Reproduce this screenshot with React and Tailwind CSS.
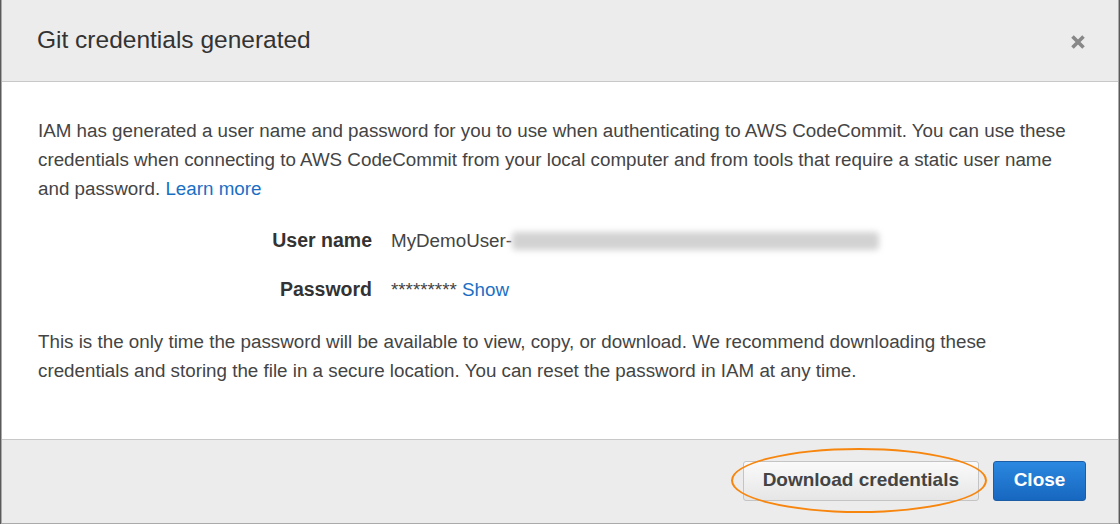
export default function App() {
  return (
    <div className="w-[1120px] h-[524px] bg-[#5a5a5a] pl-[1px] pr-[1px] font-['Liberation_Sans',Arial,sans-serif]">
      <div className="w-full h-full bg-white border-l border-r border-b border-[#aaa] flex flex-col">
        <div className="h-[82px] shrink-0 bg-[#ececec] border-b border-[#c8c8c8] flex items-center justify-between pl-[35px] pr-[32px]">
          <h1 className="text-[24.5px] text-[#333] leading-none pb-[1px]">Git credentials generated</h1>
          <svg width="16" height="16" viewBox="0 0 16 16" className="mt-[2px]">
            <path d="M2.5 2.5 L13.5 13.5 M13.5 2.5 L2.5 13.5" stroke="#888" strokeWidth="3.6" strokeLinecap="butt" />
          </svg>
        </div>
        <div className="flex-1 pt-[34px] pl-[36px] pr-[44px] text-[18.8px] leading-[29px] text-[#444]">
          <p>
            IAM has generated a user name and password for you to use when authenticating to AWS CodeCommit. You can use these credentials when connecting to AWS CodeCommit from your local computer and from tools that require a static user name and password.{" "}
            <a className="text-[#1a6fc4]">Learn more</a>
          </p>
          <div className="mt-[23px] flex flex-col gap-[20px]">
            <div className="flex items-center gap-[19px]">
              <div className="w-[334px] text-right font-bold text-[#333] text-[19.5px]">User name</div>
              <div className="flex items-center">
                <span>MyDemoUser-</span>
                <span className="relative inline-block w-[367px] h-[20px]">
                  <span className="absolute inset-x-0 inset-y-[1px] bg-[#d2d2d2] blur-[3px] rounded-sm"></span>
                </span>
              </div>
            </div>
            <div className="flex items-center gap-[19px]">
              <div className="w-[334px] text-right font-bold text-[#333] text-[19.5px]">Password</div>
              <div>
                <span>*********</span> <a className="text-[#1a6fc4]">Show</a>
              </div>
            </div>
          </div>
          <p className="mt-[23px] pr-[30px]">
            This is the only time the password will be available to view, copy, or download. We recommend downloading these credentials and storing the file in a secure location. You can reset the password in IAM at any time.
          </p>
        </div>
        <div className="h-[84px] shrink-0 bg-[#ececec] border-t border-[#c8c8c8] flex items-center justify-end gap-[14px] pr-[32px] pb-[2px]">
          <div className="relative">
            <button className="h-[40px] px-[19px] rounded-[3px] border border-[#c4c4c4] bg-gradient-to-b from-[#fafafa] to-[#e6e6e6] text-[19px] font-bold text-[#444]">
              Download credentials
            </button>
            <span className="absolute left-[-12px] right-[-8px] top-[-13px] bottom-[-12px] rounded-[50%] border-[2.5px] border-[#f7860f] pointer-events-none"></span>
          </div>
          <button className="h-[40px] w-[93px] rounded-[3px] border border-[#1c5ea6] bg-gradient-to-b from-[#2b88e0] to-[#1767bf] text-[19px] font-bold text-white">
            Close
          </button>
        </div>
      </div>
    </div>
  );
}
